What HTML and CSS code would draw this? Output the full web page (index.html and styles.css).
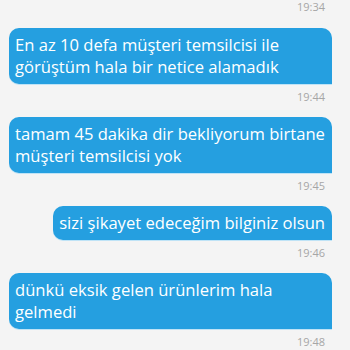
FILE: index.html
```html
<!DOCTYPE html>
<html lang="tr">
<head>
  <meta charset="UTF-8">
  <meta name="viewport" content="width=device-width, initial-scale=1.0">
  <title>Mesajlar</title>
  <link rel="stylesheet" href="styles.css">
</head>
<body>
  <div class="chat">
    <div class="time">19:34</div>
    <div class="msg">En az 10 defa müşteri temsilcisi ile görüştüm hala bir netice alamadık</div>
    <div class="time">19:44</div>
    <div class="msg">tamam 45 dakika dir bekliyorum birtane müşteri temsilcisi yok</div>
    <div class="time">19:45</div>
    <div class="msg">sizi şikayet edeceğim bilginiz olsun</div>
    <div class="time">19:46</div>
    <div class="msg">dünkü eksik gelen ürünlerim hala gelmedi</div>
    <div class="time">19:48</div>
  </div>
</body>
</html>
```

FILE: styles.css
```css
body {
  margin: 0;
  background-color: #f4f4f4;
  font-family: "Open Sans", Arial, sans-serif;
}

.chat {
  display: flex;
  flex-direction: column;
  align-items: flex-end;
  padding: 0 18px 0 9px;
}

.time {
  font-size: 11px;
  line-height: 14px;
  color: #a6a6a6;
  margin: 6px 7px 13px 0;
}

.chat .time:first-child {
  margin-top: 0;
  margin-bottom: 14px;
}

.msg {
  background-color: #259fe0;
  color: #fff;
  font-size: 16.6px;
  line-height: 22px;
  padding: 6px 7px 6px 6px;
  border-radius: 10px 10px 0 10px;
  box-shadow: 0 1px 0 #bfe3f6;
}
```
